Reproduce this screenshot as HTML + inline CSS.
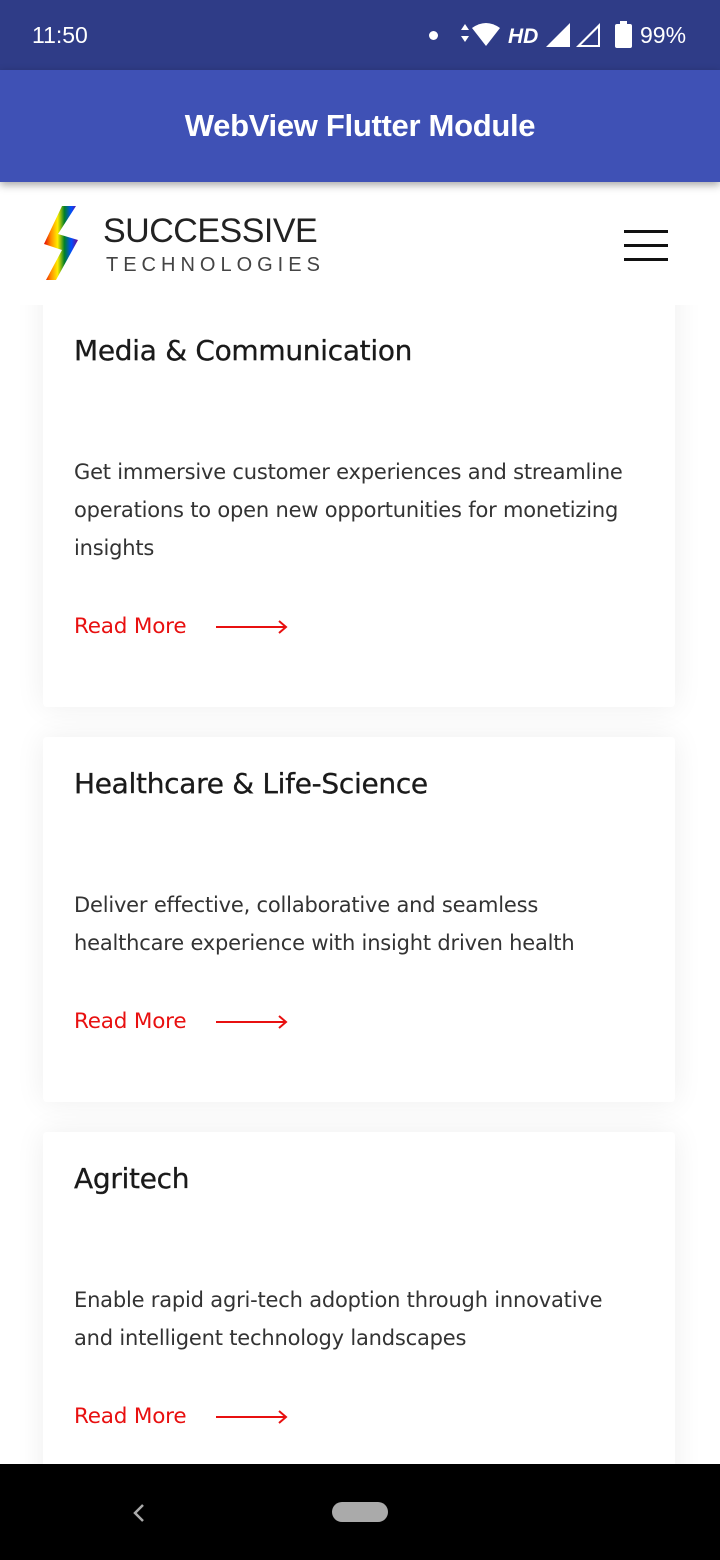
<!DOCTYPE html>
<html><head><meta charset="utf-8"><style>
*{margin:0;padding:0;box-sizing:border-box}
body{width:720px;height:1560px;overflow:hidden;background:#fff;font-family:"Liberation Sans","DejaVu Sans",sans-serif;position:relative}
.sb{position:absolute;top:0;left:0;width:720px;height:70px;background:#2f3c87;color:#fff}
.ab{position:absolute;top:70px;left:0;width:720px;height:112px;background:#3f51b5;color:#fff;font-size:31px;font-weight:bold;text-align:center;line-height:112px;box-shadow:0 3px 8px rgba(0,0,0,.35);z-index:3;letter-spacing:-.3px}
.hd{position:absolute;top:182px;left:0;width:720px;height:123px;background:#fff;z-index:2}
.card{position:absolute;left:43px;width:632px;background:#fff;border-radius:4px;box-shadow:0 0 30px rgba(0,0,0,.07)}
.card h2{position:absolute;left:31px;font-weight:normal;font-size:28px;color:#1a1a1a;font-family:"DejaVu Sans",sans-serif;letter-spacing:-.3px;-webkit-text-stroke:.3px #1a1a1a}
.card p{position:absolute;left:31px;width:580px;font-size:21px;line-height:38px;color:#333;font-family:"DejaVu Sans",sans-serif;letter-spacing:-.2px}
.rm{position:absolute;left:31px;color:#e81010;font-size:21.5px;font-family:"DejaVu Sans",sans-serif;letter-spacing:-.2px}
.rm svg{position:absolute;left:142px;top:5px}
.nav{position:absolute;top:1464px;left:0;width:720px;height:96px;background:#000;z-index:5}
</style></head><body>
<div class="sb">
<div style="position:absolute;left:32px;top:22px;font-size:23px">11:50</div>
<div style="position:absolute;left:429px;top:31px;width:9px;height:9px;border-radius:50%;background:#fff"></div>
<svg style="position:absolute;left:458px;top:22px" width="150" height="26" viewBox="0 0 150 26"><path d="M3 8l4-6 4 6zM3 14l4 6 4-6z" fill="#fff"/><path d="M14 6q14-10 28 0l-14 18z" fill="#fff"/><text x="36" y="23" font-size="11" fill="#2f3c87" font-family="Liberation Sans">4</text><text x="50" y="21" font-size="21" font-weight="bold" font-style="italic" fill="#fff" font-family="Liberation Sans">HD</text><path d="M88 25L112 1v24z" fill="#fff"/><path d="M118 25L142 1v24zM123 23h17V6z" fill="#fff" fill-rule="evenodd"/></svg>
<div style="position:absolute;left:615px;top:24px;width:17px;height:24px;background:#fff;border-radius:2px"></div>
<div style="position:absolute;left:620px;top:21px;width:7px;height:4px;background:#fff"></div>
<div style="position:absolute;left:640px;top:22px;font-size:23px">99%</div>
</div>
<div class="ab">WebView Flutter Module</div>
<div class="hd">
<svg style="position:absolute;left:42px;top:22px" width="52" height="78" viewBox="0 0 52 78">
<defs><linearGradient id="g" x1="0" y1="0" x2="1" y2="0"><stop offset="0" stop-color="#e40303"/><stop offset=".2" stop-color="#ff8c00"/><stop offset=".4" stop-color="#ffed00"/><stop offset=".6" stop-color="#008026"/><stop offset=".8" stop-color="#004dff"/><stop offset="1" stop-color="#750787"/></linearGradient></defs>
<path d="M20 2h14L16 30l20 6-22 40H4l16-30-18-6z" fill="url(#g)"/>
</svg>
<div style="position:absolute;left:103px;top:30px;font-size:34px;color:#222;letter-spacing:-.5px">SUCCESSIVE</div>
<div style="position:absolute;left:106px;top:72px;font-size:20px;color:#444;letter-spacing:5px">TECHNOLOGIES</div>
<div style="position:absolute;left:624px;top:48px;width:44px;height:3px;background:#111"></div>
<div style="position:absolute;left:624px;top:62px;width:44px;height:3px;background:#111"></div>
<div style="position:absolute;left:624px;top:76px;width:44px;height:3px;background:#111"></div>
</div>
<div class="card" style="top:250px;height:457px">
<h2 style="top:84px">Media &amp; Communication</h2>
<p style="top:203px">Get immersive customer experiences and streamline<br>operations to open new opportunities for monetizing<br>insights</p>
<div class="rm" style="top:364px">Read More<svg width="72" height="16"><path d="M0 8h70M63 2l7 6-7 6" stroke="#e81010" stroke-width="2" fill="none"/></svg></div>
</div>
<div class="card" style="top:737px;height:365px">
<h2 style="top:30px">Healthcare &amp; Life-Science</h2>
<p style="top:149px">Deliver effective, collaborative and seamless<br>healthcare experience with insight driven health</p>
<div class="rm" style="top:272px">Read More<svg width="72" height="16"><path d="M0 8h70M63 2l7 6-7 6" stroke="#e81010" stroke-width="2" fill="none"/></svg></div>
</div>
<div class="card" style="top:1132px;height:400px">
<h2 style="top:30px">Agritech</h2>
<p style="top:149px">Enable rapid agri-tech adoption through innovative<br>and intelligent technology landscapes</p>
<div class="rm" style="top:272px">Read More<svg width="72" height="16"><path d="M0 8h70M63 2l7 6-7 6" stroke="#e81010" stroke-width="2" fill="none"/></svg></div>
</div>
<div class="nav">
<svg style="position:absolute;left:131px;top:38px" width="16" height="22"><path d="M12 3l-8 8 8 8" stroke="#aaa" stroke-width="2.5" fill="none"/></svg>
<div style="position:absolute;left:332px;top:38px;width:56px;height:20px;border-radius:10px;background:#aaa"></div>
</div>
</body></html>
